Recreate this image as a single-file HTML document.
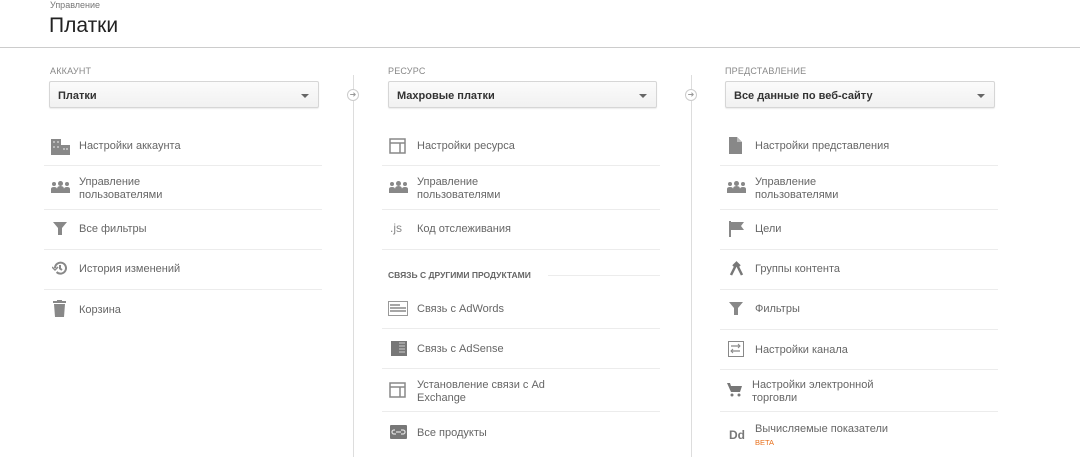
<!DOCTYPE html>
<html><head><meta charset="utf-8"><style>
*{margin:0;padding:0;box-sizing:border-box}
body{width:1080px;height:457px;background:#fff;font-family:"Liberation Sans",sans-serif;position:relative;overflow:hidden;color:#666}
.a{position:absolute}
.lbl{font-size:9px;color:#888;letter-spacing:.2px}
.dd{position:absolute;height:27px;border:1px solid #d6d6d6;border-radius:2px;background:linear-gradient(#fbfbfb,#f1f1f1);box-shadow:0 1px 1px rgba(0,0,0,.08);font-size:11px;font-weight:bold;color:#333;padding:8px 8px}
.dd:after{content:"";position:absolute;right:9px;top:12px;border:4px solid transparent;border-top:4px solid #666;border-bottom:0}
.t{position:absolute;font-size:11px;color:#666;line-height:13px;margin-top:1px}
.sep{position:absolute;height:1px;background:#ececec}
.vl{position:absolute;width:1px;background:#ddd;top:75px;height:382px}
.circ{position:absolute;width:12px;height:12px;border:1px solid #ccc;border-radius:50%;background:#fff;font-size:8px;color:#999;text-align:center;line-height:10px}
.ic{position:absolute}
</style></head><body>
<div class="a" style="left:50px;top:0;font-size:9px;color:#777">Управление</div>
<div class="a" style="left:49px;top:14px;font-size:21px;color:#222">Платки</div>
<div class="a" style="left:0;top:47px;width:1080px;height:1px;background:#ccc"></div>

<div class="vl" style="left:353px"></div><div class="circ" style="left:347px;top:89px">➜</div>
<div class="vl" style="left:691px"></div><div class="circ" style="left:685px;top:89px">➜</div>

<!-- col1 -->
<div class="a lbl" style="left:50px;top:66px">АККАУНТ</div>
<div class="dd" style="left:49px;top:81px;width:270px">Платки</div>
<svg class="ic" style="left:51px;top:139px" width="19" height="16"><rect x="0" y="0" width="10" height="16" fill="#888"/><rect x="10" y="6" width="9" height="10" fill="#888"/><g fill="#bbb"><rect x="2" y="2" width="2" height="2"/><rect x="6" y="2" width="2" height="2"/><rect x="2" y="7" width="2" height="2"/><rect x="6" y="7" width="2" height="2"/><rect x="12" y="9" width="2" height="2"/><rect x="15" y="9" width="2" height="2"/></g></svg>
<div class="t" style="left:79px;top:139px">Настройки аккаунта</div>
<div class="sep" style="left:44px;top:165px;width:278px"></div>
<svg class="ic" style="left:51px;top:181px" width="19" height="12" fill="#888"><circle cx="3" cy="3" r="2"/><circle cx="9.5" cy="2.5" r="2.5"/><circle cx="16" cy="3" r="2"/><path d="M0 12V8q0-2 3-2t3 2q0-3 3.5-3T13 8q0-2 3-2t3 2v4z"/></svg>
<div class="t" style="left:79px;top:175px">Управление<br>пользователями</div>
<div class="sep" style="left:44px;top:209px;width:278px"></div>
<svg class="ic" style="left:53px;top:222px" width="14" height="13" fill="#888"><path d="M0 0h14L9 6v7H5V6z"/></svg>
<div class="t" style="left:79px;top:222px">Все фильтры</div>
<div class="sep" style="left:44px;top:249px;width:278px"></div>
<svg class="ic" style="left:52px;top:261px" width="15" height="14" fill="none" stroke="#888" stroke-width="2"><path d="M3 7a5.5 5.5 0 1 1 1.6 4"/><path d="M8 4v3.5l2 1.5"/><path d="M0 6l3 3 3-3" stroke-width="1.5"/></svg>
<div class="t" style="left:79px;top:262px">История изменений</div>
<div class="sep" style="left:44px;top:289px;width:278px"></div>
<svg class="ic" style="left:53px;top:300px" width="13" height="17" fill="#888"><rect x="0" y="1" width="13" height="2"/><rect x="4" y="0" width="5" height="2"/><path d="M1 4h11l-1 13H2z"/></svg>
<div class="t" style="left:79px;top:303px">Корзина</div>

<!-- col2 -->
<div class="a lbl" style="left:388px;top:66px">РЕСУРС</div>
<div class="dd" style="left:388px;top:81px;width:269px">Махровые платки</div>
<svg class="ic" style="left:389px;top:138px" width="17" height="16" fill="none" stroke="#888" stroke-width="1.5"><rect x="1" y="1" width="15" height="14"/><path d="M1 5h15M11 5v10"/></svg>
<div class="t" style="left:417px;top:139px">Настройки ресурса</div>
<div class="sep" style="left:382px;top:165px;width:278px"></div>
<svg class="ic" style="left:389px;top:181px" width="19" height="12" fill="#888"><circle cx="3" cy="3" r="2"/><circle cx="9.5" cy="2.5" r="2.5"/><circle cx="16" cy="3" r="2"/><path d="M0 12V8q0-2 3-2t3 2q0-3 3.5-3T13 8q0-2 3-2t3 2v4z"/></svg>
<div class="t" style="left:417px;top:175px">Управление<br>пользователями</div>
<div class="sep" style="left:382px;top:209px;width:278px"></div>
<div class="t" style="left:390px;top:221px;font-size:12px;color:#888">.js</div>
<div class="t" style="left:417px;top:222px">Код отслеживания</div>
<div class="sep" style="left:382px;top:249px;width:278px"></div>
<div class="a" style="left:388px;top:270px;font-size:8.5px;font-weight:bold;color:#666">СВЯЗЬ С ДРУГИМИ ПРОДУКТАМИ</div>
<div class="sep" style="left:548px;top:275px;width:112px"></div>
<svg class="ic" style="left:388px;top:301px" width="20" height="15" fill="none" stroke="#999" stroke-width="1"><rect x=".5" y=".5" width="19" height="14"/><path d="M2 4h10M2 7h16M2 10h16" stroke="#888" stroke-width="1.5"/></svg>
<div class="t" style="left:417px;top:302px">Связь с AdWords</div>
<div class="sep" style="left:382px;top:328px;width:278px"></div>
<svg class="ic" style="left:391px;top:341px" width="16" height="15"><rect width="16" height="15" fill="#777"/><path d="M8 2h6M8 5h6M8 8h6M8 11h6" stroke="#ccc"/></svg>
<div class="t" style="left:417px;top:342px">Связь с AdSense</div>
<div class="sep" style="left:382px;top:368px;width:278px"></div>
<svg class="ic" style="left:389px;top:382px" width="17" height="16" fill="none" stroke="#888" stroke-width="1.5"><rect x="1" y="1" width="15" height="14"/><path d="M1 5h15M11 5v10"/></svg>
<div class="t" style="left:417px;top:378px">Установление связи с Ad<br>Exchange</div>
<div class="sep" style="left:382px;top:411px;width:278px"></div>
<svg class="ic" style="left:390px;top:425px" width="17" height="14"><rect width="17" height="14" rx="1" fill="#777"/><path d="M5 5h-1a2 2 0 0 0 0 4h2M11 5h2a2 2 0 0 1 0 4h-2M6 7h5" stroke="#ddd" stroke-width="1.3" fill="none"/></svg>
<div class="t" style="left:417px;top:426px">Все продукты</div>

<!-- col3 -->
<div class="a lbl" style="left:725px;top:66px">ПРЕДСТАВЛЕНИЕ</div>
<div class="dd" style="left:725px;top:81px;width:270px">Все данные по веб-сайту</div>
<svg class="ic" style="left:729px;top:137px" width="13" height="17" fill="#888"><path d="M0 0h8l5 5v12H0z"/><path d="M8 0v5h5" fill="#bbb"/></svg>
<div class="t" style="left:755px;top:139px">Настройки представления</div>
<div class="sep" style="left:720px;top:165px;width:278px"></div>
<svg class="ic" style="left:727px;top:181px" width="19" height="12" fill="#888"><circle cx="3" cy="3" r="2"/><circle cx="9.5" cy="2.5" r="2.5"/><circle cx="16" cy="3" r="2"/><path d="M0 12V8q0-2 3-2t3 2q0-3 3.5-3T13 8q0-2 3-2t3 2v4z"/></svg>
<div class="t" style="left:755px;top:175px">Управление<br>пользователями</div>
<div class="sep" style="left:720px;top:209px;width:278px"></div>
<svg class="ic" style="left:729px;top:221px" width="15" height="16" fill="#888"><rect x="0" y="0" width="2" height="16"/><path d="M2 1h13l-3 4 3 4H2z"/></svg>
<div class="t" style="left:755px;top:222px">Цели</div>
<div class="sep" style="left:720px;top:249px;width:278px"></div>
<svg class="ic" style="left:729px;top:261px" width="15" height="15" fill="none" stroke="#777" stroke-width="2.5"><path d="M2 14L7.5 3 13 14"/><path d="M4 5l3.5-3.5L11 5" stroke-width="2"/></svg>
<div class="t" style="left:755px;top:262px">Группы контента</div>
<div class="sep" style="left:720px;top:289px;width:278px"></div>
<svg class="ic" style="left:729px;top:302px" width="14" height="13" fill="#888"><path d="M0 0h14L9 6v7H5V6z"/></svg>
<div class="t" style="left:755px;top:302px">Фильтры</div>
<div class="sep" style="left:720px;top:329px;width:278px"></div>
<svg class="ic" style="left:728px;top:341px" width="16" height="16" fill="none" stroke="#888"><rect x=".5" y=".5" width="15" height="15"/><path d="M3 5h9M3 10h9" stroke-width="1.2"/><path d="M10 3l2 2-2 2M5 8l-2 2 2 2" stroke-width="1"/></svg>
<div class="t" style="left:755px;top:343px">Настройки канала</div>
<div class="sep" style="left:720px;top:369px;width:278px"></div>
<svg class="ic" style="left:727px;top:383px" width="15" height="14" fill="#777"><path d="M0 0h3l1 3h11l-2 6H4z"/><circle cx="5" cy="12" r="1.5"/><circle cx="12" cy="12" r="1.5"/></svg>
<div class="t" style="left:752px;top:378px">Настройки электронной<br>торговли</div>
<div class="sep" style="left:720px;top:411px;width:278px"></div>
<div class="t" style="left:729px;top:428px;font-size:12px;font-weight:bold;color:#777">Dd</div>
<div class="t" style="left:755px;top:422px">Вычисляемые показатели</div>
<div class="a" style="left:755px;top:438px;font-size:7.5px;color:#e8711c">BETA</div>
</body></html>
